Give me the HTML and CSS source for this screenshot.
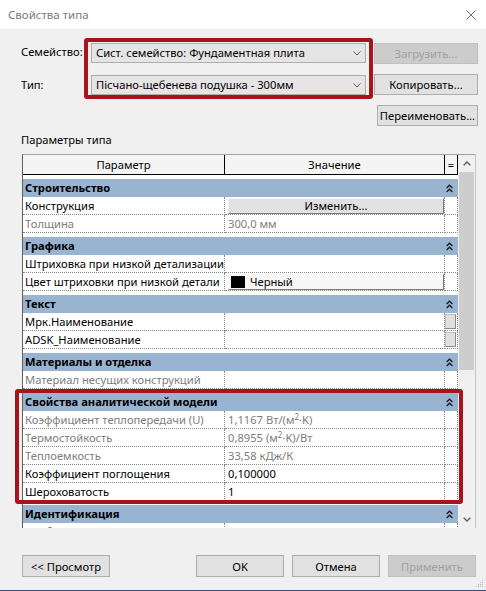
FILE: index.html
```html
<!DOCTYPE html>
<html lang="ru">
<head>
<meta charset="utf-8">
<title>Свойства типа</title>
<link rel="stylesheet" href="styles.css">
</head>
<body>
<div class="window">
  <div class="titlebar">
    <span class="title">Свойства типа</span>
    <svg class="close" width="10" height="10" viewBox="0 0 10 10"><path d="M0.5 0.5L9.5 9.5M9.5 0.5L0.5 9.5" stroke="#707070" stroke-width="1" fill="none"/></svg>
  </div>
  <div class="body">
    <div class="top">
      <div class="labels">
        <div class="label">Семейство:</div>
        <div class="label">Тип:</div>
      </div>
      <div class="highlight-box">
        <div class="combo"><span>Сист. семейство: Фундаментная плита</span><svg class="chev" width="8" height="5" viewBox="0 0 8 5"><path d="M0.5 0.5L4 4L7.5 0.5" stroke="#5a5a5a" stroke-width="1" fill="none"/></svg></div>
        <div class="combo"><span>Пісчано-щебенева подушка - 300мм</span><svg class="chev" width="8" height="5" viewBox="0 0 8 5"><path d="M0.5 0.5L4 4L7.5 0.5" stroke="#5a5a5a" stroke-width="1" fill="none"/></svg></div>
      </div>
      <div class="side-buttons">
        <div class="btn disabled">Загрузить...</div>
        <div class="btn">Копировать...</div>
        <div class="btn narrow">Переименовать...</div>
      </div>
    </div>

    <div class="section-label">Параметры типа</div>

    <div class="table">
      <div class="viewport">
        <div class="thead">
          <div>Параметр</div>
          <div>Значение</div>
          <div>=</div>
        </div>

        <div class="group">
          <div class="band"><div>Строительство</div><div class="collapse"><svg width="7" height="9" viewBox="0 0 7 9"><path d="M0.6 4L3.5 1.2L6.4 4M0.6 8L3.5 5.2L6.4 8" stroke="#1a1a1a" stroke-width="1.3" fill="none"/></svg></div></div>
          <div class="row"><div>Конструкция</div><div class="val-btn"><span class="cellbtn">Изменить...</span></div><div></div></div>
          <div class="row ro"><div>Толщина</div><div>300,0 мм</div><div></div></div>
        </div>

        <div class="group">
          <div class="band"><div>Графика</div><div class="collapse"><svg width="7" height="9" viewBox="0 0 7 9"><path d="M0.6 4L3.5 1.2L6.4 4M0.6 8L3.5 5.2L6.4 8" stroke="#1a1a1a" stroke-width="1.3" fill="none"/></svg></div></div>
          <div class="row"><div>Штриховка при низкой детализации</div><div></div><div></div></div>
          <div class="row"><div>Цвет штриховки при низкой детали</div><div class="val-btn"><span class="colorbtn"><span class="swatch"></span>Черный</span></div><div></div></div>
        </div>

        <div class="group">
          <div class="band"><div>Текст</div><div class="collapse"><svg width="7" height="9" viewBox="0 0 7 9"><path d="M0.6 4L3.5 1.2L6.4 4M0.6 8L3.5 5.2L6.4 8" stroke="#1a1a1a" stroke-width="1.3" fill="none"/></svg></div></div>
          <div class="row"><div>Мрк.Наименование</div><div></div><div class="eq-cell"><span class="minibtn"></span></div></div>
          <div class="row"><div>ADSK_Наименование</div><div></div><div class="eq-cell"><span class="minibtn"></span></div></div>
        </div>

        <div class="group">
          <div class="band"><div>Материалы и отделка</div><div class="collapse"><svg width="7" height="9" viewBox="0 0 7 9"><path d="M0.6 4L3.5 1.2L6.4 4M0.6 8L3.5 5.2L6.4 8" stroke="#1a1a1a" stroke-width="1.3" fill="none"/></svg></div></div>
          <div class="row ro"><div>Материал несущих конструкций</div><div></div><div></div></div>
        </div>

        <div class="group">
          <div class="band"><div>Свойства аналитической модели</div><div class="collapse"><svg width="7" height="9" viewBox="0 0 7 9"><path d="M0.6 4L3.5 1.2L6.4 4M0.6 8L3.5 5.2L6.4 8" stroke="#1a1a1a" stroke-width="1.3" fill="none"/></svg></div></div>
          <div class="row ro"><div>Коэффициент теплопередачи (U)</div><div>1,1167 Вт/(м<sup>2</sup>·K)</div><div></div></div>
          <div class="row ro"><div>Термостойкость</div><div>0,8955 (м<sup>2</sup>·K)/Вт</div><div></div></div>
          <div class="row ro"><div>Теплоемкость</div><div>33,58 кДж/К</div><div></div></div>
          <div class="row"><div>Коэффициент поглощения</div><div>0,100000</div><div></div></div>
          <div class="row"><div>Шероховатость</div><div>1</div><div></div></div>
        </div>

        <div class="group">
          <div class="band"><div>Идентификация</div><div class="collapse"><svg width="7" height="9" viewBox="0 0 7 9"><path d="M0.6 4L3.5 1.2L6.4 4M0.6 8L3.5 5.2L6.4 8" stroke="#1a1a1a" stroke-width="1.3" fill="none"/></svg></div></div>
          <div class="row"><div>Изображение</div><div></div><div></div></div>
        </div>
      </div>

      <div class="scrollbar">
        <div class="sb-arrow"><svg width="8" height="5" viewBox="0 0 8 5"><path d="M0.7 4.3L4 1L7.3 4.3" stroke="#606060" stroke-width="1.4" fill="none"/></svg></div>
        <div class="sb-thumb"></div>
        <div class="sb-track"></div>
        <div class="sb-arrow"><svg width="8" height="5" viewBox="0 0 8 5"><path d="M0.7 0.7L4 4L7.3 0.7" stroke="#606060" stroke-width="1.4" fill="none"/></svg></div>
      </div>

      <div class="annotation"></div>
    </div>

    <div class="footer">
      <div class="btn wide">&lt;&lt; Просмотр</div>
      <div class="footer-right">
        <div class="btn wide">OK</div>
        <div class="btn wide">Отмена</div>
        <div class="btn wide disabled">Применить</div>
      </div>
    </div>

    <svg class="grip" width="8" height="8" viewBox="0 0 8 8"><g fill="#b8b8b8"><rect x="6" y="0" width="1" height="1"/><rect x="4" y="2" width="1" height="1"/><rect x="6" y="2" width="1" height="1"/><rect x="2" y="4" width="1" height="1"/><rect x="4" y="4" width="1" height="1"/><rect x="6" y="4" width="1" height="1"/><rect x="0" y="6" width="1" height="1"/><rect x="2" y="6" width="1" height="1"/><rect x="4" y="6" width="1" height="1"/><rect x="6" y="6" width="1" height="1"/></g></svg>
  </div>
</div>
</body>
</html>
```

FILE: styles.css
```css
* { box-sizing: border-box; }
html, body { margin: 0; padding: 0; }
body {
  font-family: "Noto Sans", "DejaVu Sans", sans-serif;
  font-size: 11.2px;
  color: #000;
  background: #f0f0f0;
}
.window {
  width: 486px;
  height: 591px;
  display: flex;
  flex-direction: column;
  background: #f0f0f0;
  overflow: hidden;
}
.titlebar {
  height: 29px;
  flex: none;
  background: #fff;
  display: flex;
  align-items: center;
  justify-content: space-between;
  padding: 0 10px 0 8px;
}
.title { color: #7a7a7a; line-height: 16px; font-size: 11.5px; }
.close { display: block; }

.body {
  flex: 1;
  position: relative;
  padding: 9px 10px 0 21px;
  border-bottom: 1px solid #2e4f80;
  display: flex;
  flex-direction: column;
}

.top { display: flex; align-items: flex-start; }
.labels {
  width: 63px;
  padding-top: 4px;
  display: flex;
  flex-direction: column;
  gap: 13px;
}
.label { height: 20px; line-height: 20px; white-space: nowrap; }

.highlight-box {
  border: 4px solid #a8141b;
  border-radius: 3px;
  padding: 1px 3px 0;
  display: flex;
  flex-direction: column;
  gap: 12px;
}
.combo {
  width: 275px;
  height: 20px;
  background: #e5e5e5;
  border: 1px solid #adadad;
  display: flex;
  align-items: center;
  justify-content: space-between;
  padding: 0 4px 0 4px;
  white-space: nowrap;
  line-height: 18px;
}
.chev { display: block; flex: none; }

.side-buttons {
  margin: 5px -2px 0 1px;
  width: 104px;
  display: flex;
  flex-direction: column;
  align-items: flex-end;
  gap: 10px;
}
.btn {
  width: 100%;
  height: 21px;
  border: 1px solid #adadad;
  background: #e1e1e1;
  display: flex;
  align-items: center;
  justify-content: center;
  line-height: 19px;
  white-space: nowrap;
}
.btn.narrow { width: 101px; }
.btn.disabled { background: #cccccc; border-color: #bfbfbf; color: #a0a0a0; }
.btn.wide { width: 88px; height: 22px; }

.section-label {
  margin-top: 6px;
  height: 16px;
  line-height: 16px;
}

.table {
  position: relative;
  margin: 6px 0 0 1px;
  width: 454px;
  height: 374px;
  flex: none;
  border-top: 1px solid #a0a0a0;
  border-left: 1px solid #5f5f5f;
  border-right: 1px solid #c4c4c4;
  display: flex;
  background: #fff;
}
.viewport {
  width: 435px;
  height: 373px;
  overflow: hidden;
  background: #fff;
}
.thead {
  display: grid;
  grid-template-columns: 202px 220px 13px;
  height: 20px;
  background: #f4f4f4;
  border-bottom: 1px solid #000;
}
.thead > div {
  border-right: 1px solid #000;
  text-align: center;
  line-height: 19px;
}
.group { margin-top: 4px; }
.band {
  display: grid;
  grid-template-columns: 422px 13px;
  height: 18px;
  background: #99b4d1;
  font-weight: bold;
  line-height: 18px;
}
.band > div:first-child { padding-left: 2px; white-space: nowrap; }
.collapse { display: flex; align-items: center; padding-left: 1px; }
.collapse svg { display: block; }

.row {
  display: grid;
  grid-template-columns: 202px 220px 13px;
  height: 18px;
}
.row > div {
  border-right: 1px dotted #8a8a8a;
  border-bottom: 1px dotted #8a8a8a;
  line-height: 17px;
  white-space: nowrap;
  overflow: hidden;
}
.row > div:first-child { padding-left: 2px; }
.row > div:nth-child(2) { padding-left: 3px; }
.row.ro > div { color: #7d7d7d; }
.row sup { font-size: 8px; line-height: 0; vertical-align: 4px; }

.row > .val-btn { padding: 1px 0 0 0; }
.cellbtn {
  display: flex;
  align-items: center;
  justify-content: center;
  height: 16px;
  background: #e1e1e1;
  border: 1px solid;
  border-color: #f6f6f6 #7a7a7a #7a7a7a #f6f6f6;
  line-height: 14px;
}
.colorbtn {
  display: flex;
  align-items: center;
  gap: 5px;
  height: 16px;
  padding-left: 2px;
  background: #f7f7f7;
  border: 1px solid;
  border-color: #f6f6f6 #7a7a7a #7a7a7a #f6f6f6;
  line-height: 14px;
}
.swatch { width: 14px; height: 12px; background: #000; flex: none; }
.row > .eq-cell { padding-top: 1px; }
.minibtn {
  display: block;
  width: 11px;
  height: 15px;
  background: #e0e0e0;
  border: 1px solid;
  border-color: #bdbdbd #8a8a8a #8a8a8a #bdbdbd;
}

.scrollbar {
  width: 17px;
  background: #f0f0f0;
  display: flex;
  flex-direction: column;
}
.sb-arrow {
  height: 17px;
  flex: none;
  display: flex;
  align-items: center;
  justify-content: center;
}
.sb-arrow svg { display: block; }
.sb-thumb { height: 198px; margin: 0 1px 0 1px; background: #cdcdcd; flex: none; }
.sb-track { flex: 1; }

.annotation {
  position: absolute;
  left: -8px;
  top: 234px;
  width: 448px;
  height: 115px;
  border: 4px solid #a8141b;
  border-radius: 3px;
  pointer-events: none;
}

.footer {
  margin-top: 27px;
  display: flex;
  justify-content: space-between;
  padding-left: 1px;
}
.footer-right { display: flex; gap: 8px; }

.grip { position: absolute; right: 2px; bottom: 2px; display: block; }
```
